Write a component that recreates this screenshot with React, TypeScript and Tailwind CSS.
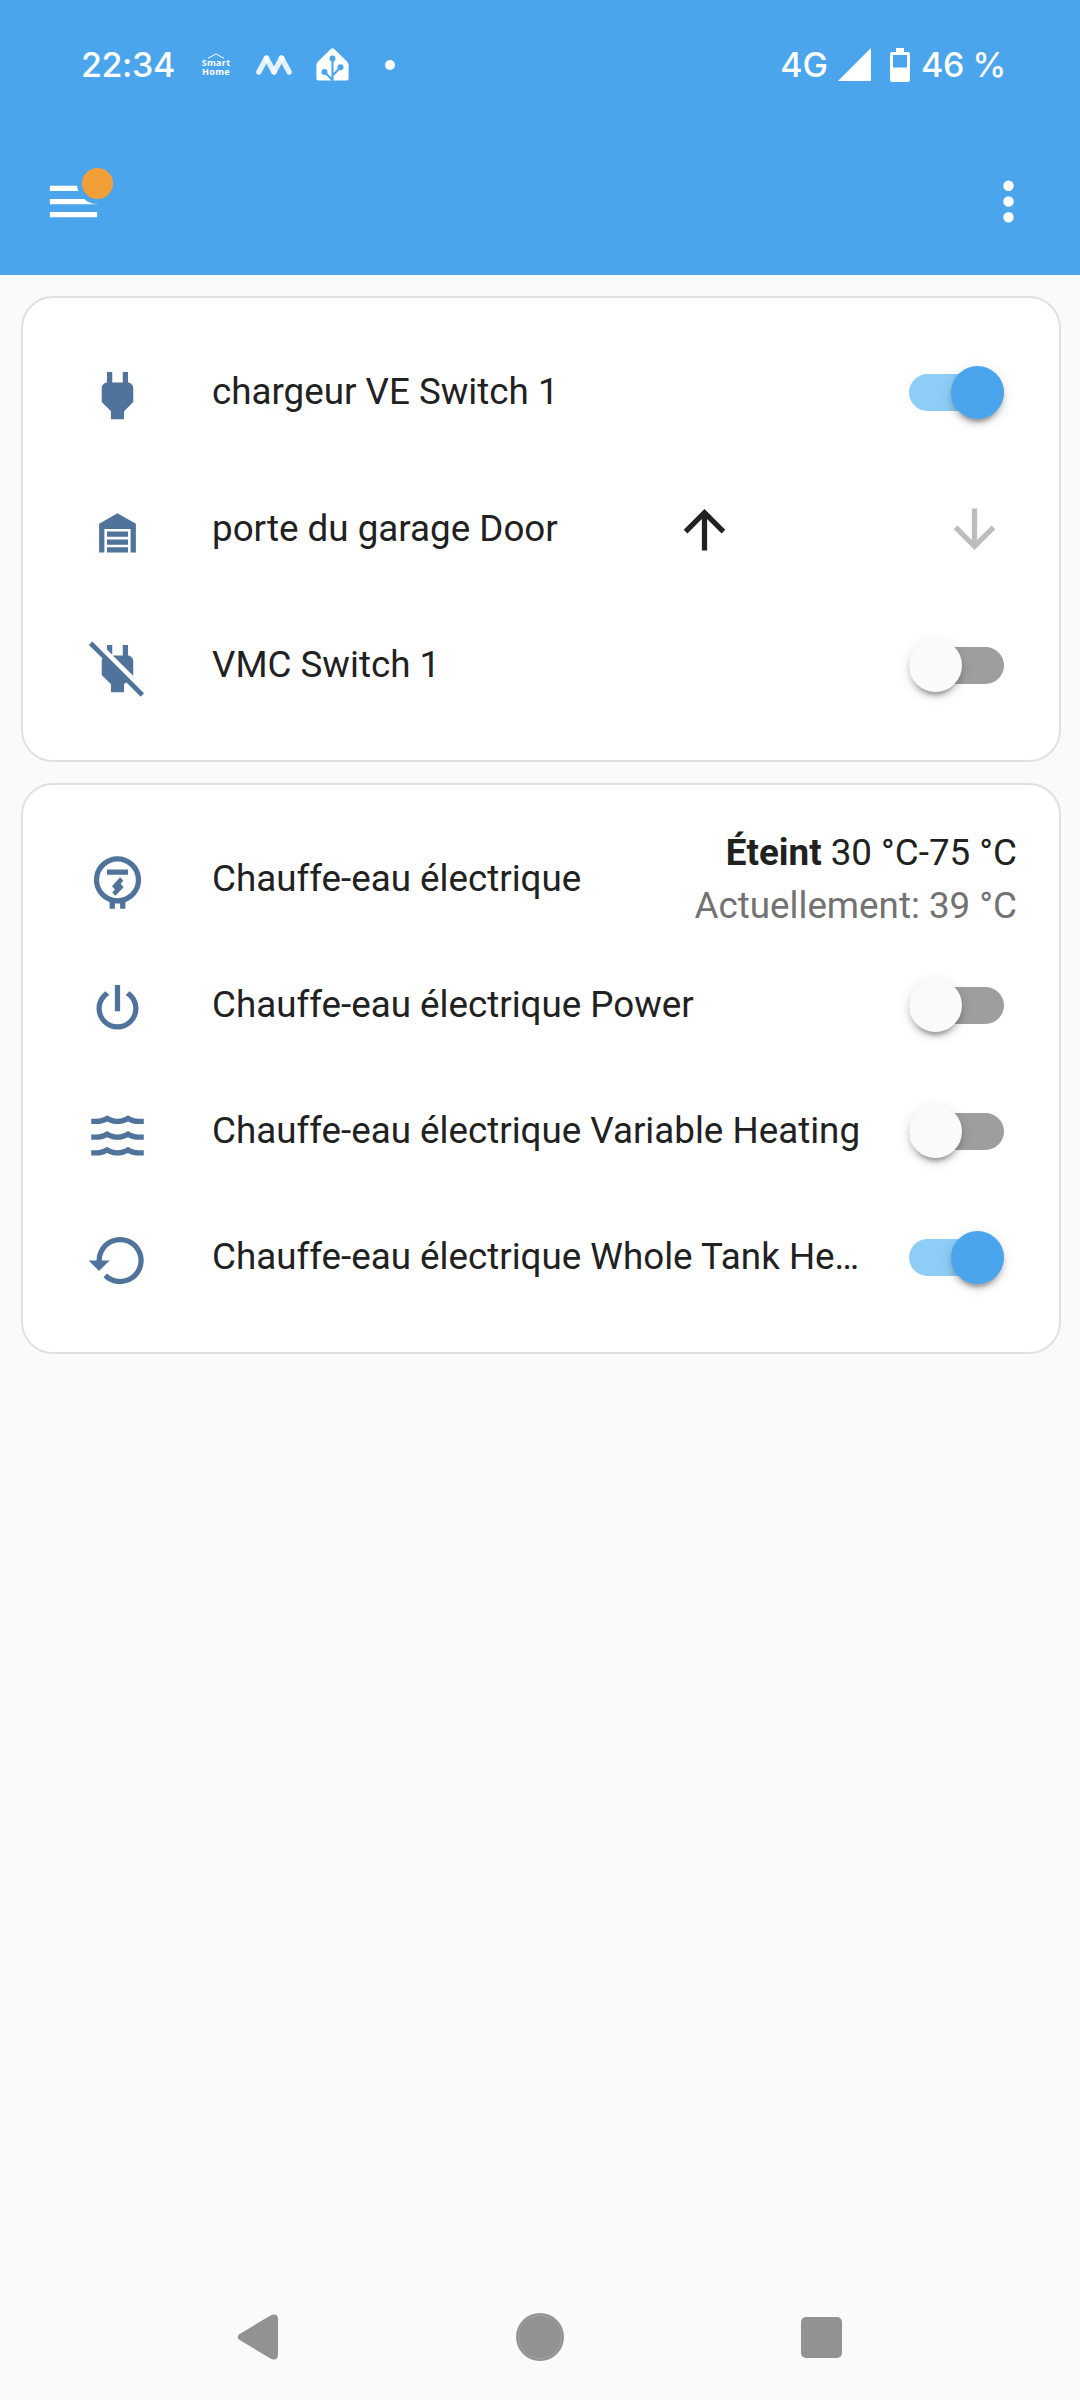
import { ReactNode } from "react";

const ICONS = {
  powerPlug:
    "M16,7V3H14V7H10V3H8V7H8C7,7 6,8 6,9V14.5L9.5,18V21H14.5V18L18,14.5V9C18,8 17,7 16,7Z",
  powerPlugOff:
    "M20.84 22.73L15.31 17.2L14.5 18V21H9.5V18L6 14.5V9C6 8.7 6.1 8.41 6.25 8.14L1.11 3L2.39 1.73L22.11 21.46L20.84 22.73M18 14.5V9C18 8 17 7 16 7V3H14V7H10.2L17.85 14.65L18 14.5M10 3H8V4.8L10 6.8V3Z",
  garage:
    "M19,20H17V11H7V20H5V9L12,5L19,9V20M8,12H16V14H8V12M8,15H16V17H8V15M16,18V20H8V18H16Z",
  waterHeater:
    "M12 2A9 9 0 0 0 9 19.48V22H11V20H13V22H15V19.48A9 9 0 0 0 12 2M12 4A7 7 0 0 1 12 18A7 7 0 0 1 12 4M8 7V9H16V7H8M13 10L9.9 13.4L11 14.7L10 15.8L11.2 17L14.3 13.8L13.2 12.5L14.2 11.2L13 10Z",
  power:
    "M16.56,5.44L15.11,6.89C16.84,7.94 18,9.83 18,12A6,6 0 0,1 12,18A6,6 0 0,1 6,12C6,9.83 7.16,7.94 8.88,6.88L7.44,5.44C5.36,6.88 4,9.28 4,12A8,8 0 0,0 12,20A8,8 0 0,0 20,12C20,9.28 18.64,6.88 16.56,5.44M13,3H11V13H13",
  waves:
    "M20,12H22V14H20C18.62,14 17.26,13.65 16,13C13.5,14.3 10.5,14.3 8,13C6.74,13.65 5.37,14 4,14H2V12H4C5.39,12 6.78,11.53 8,10.67C10.44,12.38 13.56,12.38 16,10.67C17.22,11.53 18.61,12 20,12M20,6H22V8H20C18.62,8 17.26,7.65 16,7C13.5,8.3 10.5,8.3 8,7C6.74,7.65 5.37,8 4,8H2V6H4C5.39,6 6.78,5.53 8,4.67C10.44,6.38 13.56,6.38 16,4.67C17.22,5.53 18.61,6 20,6M20,18H22V20H20C18.62,20 17.26,19.65 16,19C13.5,20.3 10.5,20.3 8,19C6.74,19.65 5.37,20 4,20H2V18H4C5.39,18 6.78,17.53 8,16.67C10.44,18.38 13.56,18.38 16,16.67C17.22,17.53 18.61,18 20,18Z",
  restore:
    "M13,3A9,9 0 0,0 4,12H1L4.89,15.89L4.96,16.03L9,12H6A7,7 0 0,1 13,5A7,7 0 0,1 20,12A7,7 0 0,1 13,19C11.07,19 9.32,18.21 8.06,16.94L6.64,18.36C8.27,20 10.5,21 13,21A9,9 0 0,0 22,12A9,9 0 0,0 13,3Z",
  arrowUp: "M13,20H11V8L5.5,13.5L4.08,12.08L12,4.16L19.92,12.08L18.5,13.5L13,8V20Z",
  arrowDown: "M11,4H13V16L18.5,10.5L19.92,11.92L12,19.84L4.08,11.92L5.5,10.5L11,16V4Z",
  menu: "M3,6H21V8H3V6M3,11H21V13H3V11M3,16H21V18H3V16Z",
  dotsVertical:
    "M12,16A2,2 0 0,1 14,18A2,2 0 0,1 12,20A2,2 0 0,1 10,18A2,2 0 0,1 12,16M12,10A2,2 0 0,1 14,12A2,2 0 0,1 12,14A2,2 0 0,1 10,12A2,2 0 0,1 12,10M12,4A2,2 0 0,1 14,6A2,2 0 0,1 12,8A2,2 0 0,1 10,6A2,2 0 0,1 12,4Z",
};

type IconName = keyof typeof ICONS;

function Icon({ name }: { name: IconName }) {
  return (
    <svg viewBox="0 0 24 24" fill="currentColor" className="size-[63px] shrink-0">
      <path fillRule={name === "waterHeater" ? "evenodd" : "nonzero"} d={ICONS[name]} />
    </svg>
  );
}

function StatusBar() {
  return (
    <div className="flex h-[128px] items-center pl-[81px] pr-[75px] pt-px font-[Inter,sans-serif] text-[34px] font-medium leading-none">
      <span className="w-[121px] tracking-[-0.4px]">22:34</span>
      <div className="flex w-[28px] flex-col items-center font-['Open_Sans',sans-serif] text-[9px] font-bold leading-[8.5px]">
        <svg viewBox="0 0 18 6" className="h-[6px] w-[18px]" fill="none" stroke="currentColor">
          <path d="M1 5.3L9 1L17 5.3" />
        </svg>
        <span className="tracking-[0.3px]">Smart</span>
        <span className="tracking-[0.3px]">Home</span>
      </div>
      <svg viewBox="0 0 36 20" className="ml-[26px] h-[20px] w-[36px]" fill="none" strokeWidth="5.4" strokeLinecap="round">
        <path d="M2.9 17L10.4 3" stroke="#fff" strokeOpacity="0.85" />
        <path d="M10.4 3L18 17" stroke="#fff" strokeOpacity="0.85" />
        <path d="M18 17L25.6 3" stroke="#fff" strokeOpacity="0.85" />
        <path d="M25.6 3L33.1 17" stroke="#fff" strokeOpacity="0.85" />
      </svg>
      <svg viewBox="0 0 33 33" className="ml-[23.5px] h-[33px] w-[33px]">
        <path
          d="M14.6 1.2Q16.5 -0.6 18.4 1.2L31 13.6Q32.6 15.3 32.6 17.4V30.4Q32.6 32.4 30.6 32.4H2.4Q0.4 32.4 0.4 30.4V17.4Q0.4 15.3 2 13.6Z"
          fill="#fff"
        />
        <g fill="none" stroke="#4ba5ed" strokeWidth="2.1">
          <path d="M16.5 33V11M16.5 27.5L24.5 19.5M16.5 32L8.5 24" />
        </g>
        <g fill="#4ba5ed">
          <circle cx="16.5" cy="10.5" r="3" />
          <circle cx="24.5" cy="19.3" r="3" />
          <circle cx="8.5" cy="24" r="3" />
        </g>
      </svg>
      <span className="ml-[36.5px] size-[10px] rounded-full bg-white" />

      <div className="ml-auto flex items-center">
        <span>4G</span>
        <svg viewBox="0 0 33 33" className="ml-[10px] size-[33px]" fill="currentColor">
          <path d="M33 0V33H0Z" />
        </svg>
        <svg viewBox="0 0 20 34" className="ml-[19px] h-[34px] w-[20px]" fill="currentColor">
          <path
            fillRule="evenodd"
            d="M6 0H14V4H18Q20 4 20 6V32Q20 34 18 34H2Q0 34 0 32V6Q0 4 2 4H6ZM3 7V19.5H17V7Z"
          />
        </svg>
        <span className="ml-[11px] w-[84px] whitespace-nowrap tracking-[-0.4px]">46 %</span>
      </div>
    </div>
  );
}

function AppBar() {
  return (
    <div className="flex h-[147px] items-start justify-between pl-[42px] pr-[40px] pt-[42px]">
      <div className="relative">
        <Icon name="menu" />
        <span className="absolute left-[35px] top-[-7.5px] size-[41px] rounded-full border-5 border-[#4ba5ed] bg-[#f29f38]" />
      </div>
      <Icon name="dotsVertical" />
    </div>
  );
}

function Toggle({ on }: { on?: boolean }) {
  return (
    <div
      className={`mr-[13px] flex h-[37px] w-[95px] shrink-0 items-center rounded-full ${
        on ? "justify-end bg-[#8dcdf6]" : "bg-[#9e9e9e]"
      }`}
    >
      <span
        className={`size-[53px] shrink-0 rounded-full shadow-[0_8px_3px_-5px_rgba(0,0,0,0.2),0_5px_5px_rgba(0,0,0,0.14),0_3px_13px_rgba(0,0,0,0.12)] ${
          on ? "bg-[#4ba5ed]" : "bg-[#fafafa]"
        }`}
      />
    </div>
  );
}

function CoverControls() {
  return (
    <div className="-mr-[20.5px] flex w-[396px] shrink-0 justify-between">
      <span className="flex w-[126px] justify-center">
        <Icon name="arrowUp" />
      </span>
      <span className="flex w-[126px] justify-center text-[#bdbdbd]">
        <Icon name="arrowDown" />
      </span>
    </div>
  );
}

function Row({ icon, name, children }: { icon: IconName; name: string; children: ReactNode }) {
  return (
    <div className="flex h-[105px] items-center">
      <div className="flex w-[105px] shrink-0 justify-center pt-[5px] text-[#4f739b]">
        <Icon name={icon} />
      </div>
      <div className="ml-[42px] mr-auto min-w-0 truncate pr-[21px] leading-[52.5px]">{name}</div>
      <div className="ml-[21px] flex shrink-0 items-center justify-end">{children}</div>
    </div>
  );
}

function Card({ className, children }: { className: string; children: ReactNode }) {
  return (
    <section
      className={`flex flex-col rounded-[32px] border-2 border-[#e0e0e0] bg-white p-[42px] ${className}`}
    >
      {children}
    </section>
  );
}

function NavBar() {
  return (
    <nav className="mt-auto flex h-[126px] items-center justify-between pl-[237px] pr-[238px] text-[#929292]">
      <svg viewBox="0 0 42 46" className="h-[46px] w-[42px]" fill="currentColor">
        <path d="M2.3 20.2L33.5 1.4Q40.8 -1.5 41 5.5V40.5Q40.8 47.5 33.5 44.6L2.3 25.8Q-0.8 23 2.3 20.2Z" />
      </svg>
      <svg viewBox="0 0 48 48" className="size-[48px]">
        <circle cx="24" cy="24" r="24" fill="currentColor" />
        <circle cx="24" cy="24" r="21.7" fill="none" stroke="#a9a9a9" strokeWidth="0.7" />
      </svg>
      <span className="size-[41px] rounded-[5px] bg-[#929292]" />
    </nav>
  );
}

export default function App() {
  return (
    <div className="flex h-[2400px] w-[1080px] flex-col bg-[#fafafa] font-[Roboto,sans-serif] text-[36.75px] text-[#212121]">
      <header className="h-[275px] shrink-0 bg-[#4ba5ed] text-white">
        <StatusBar />
        <AppBar />
      </header>

      <main className="flex flex-col gap-[21px] pl-[21px] pr-[19px] pt-[21px]">
        <Card className="gap-[31.5px]">
          <Row icon="powerPlug" name="chargeur VE Switch 1">
            <Toggle on />
          </Row>
          <Row icon="garage" name="porte du garage Door">
            <CoverControls />
          </Row>
          <Row icon="powerPlugOff" name="VMC Switch 1">
            <Toggle />
          </Row>
        </Card>

        <Card className="gap-[21px]">
          <Row icon="waterHeater" name="Chauffe-eau électrique">
            <div className="text-right leading-[52.5px]">
              <div>
                <span className="font-bold">Éteint</span> 30 °C-75 °C
              </div>
              <div className="text-[#727272]">Actuellement: 39 °C</div>
            </div>
          </Row>
          <Row icon="power" name="Chauffe-eau électrique Power">
            <Toggle />
          </Row>
          <Row icon="waves" name="Chauffe-eau électrique Variable Heating">
            <Toggle />
          </Row>
          <Row icon="restore" name="Chauffe-eau électrique Whole Tank Heating">
            <Toggle on />
          </Row>
        </Card>
      </main>

      <NavBar />
    </div>
  );
}
